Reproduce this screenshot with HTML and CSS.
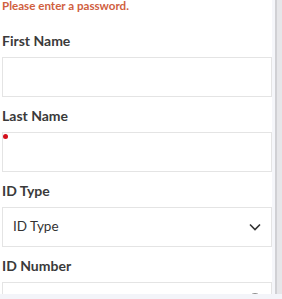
FILE: index.html
```html
<!DOCTYPE html>
<html lang="en">
<head>
    <meta charset="UTF-8">
    <meta name="viewport" content="width=device-width, initial-scale=1.0">
    <title>Register</title>
    <link rel="stylesheet" href="styles.css">
</head>
<body>
    <div class="page">
        <form class="form">
            <p class="error">Please enter a password.</p>

            <div class="field">
                <label for="firstName">First Name</label>
                <input type="text" id="firstName">
            </div>

            <div class="field">
                <label for="lastName">Last Name</label>
                <div class="control">
                    <span class="marker"></span>
                    <input type="text" id="lastName">
                </div>
            </div>

            <div class="field">
                <label for="idType">ID Type</label>
                <div class="select">
                    <span>ID Type</span>
                    <svg width="12" height="8" viewBox="0 0 12 8">
                        <path d="M1 1.5 L6 6.5 L11 1.5" fill="none" stroke="#333" stroke-width="1.6"/>
                    </svg>
                </div>
            </div>

            <div class="field">
                <label for="idNumber">ID Number</label>
                <div class="control">
                    <input type="text" id="idNumber">
                    <span class="eye"></span>
                </div>
            </div>
        </form>
        <div class="gutter"><div class="scrollbar"></div></div>
    </div>
    <div class="bottombar"></div>
</body>
</html>
```

FILE: styles.css
```css
html, body {
    margin: 0;
    height: 100%;
    overflow: hidden;
    background-color: #ffffff;
    font-family: Lato, "Open Sans", sans-serif;
    color: #333333;
}

.page {
    display: flex;
    height: 100%;
}

.form {
    width: 270px;
    padding-left: 2px;
}

.error {
    margin: -1px 0 19px;
    font-size: 11.6px;
    line-height: 13px;
    font-weight: bold;
    color: #d0603f;
}

.field {
    margin-bottom: 9px;
}

label {
    display: block;
    font-size: 14px;
    line-height: 20px;
    font-weight: bold;
    color: #3a3a3a;
    margin-bottom: 6px;
}

input {
    display: block;
    box-sizing: border-box;
    width: 100%;
    height: 40px;
    margin: 0;
    border: 1px solid #e4e4e4;
    background: #ffffff;
}

.control {
    position: relative;
}

.marker {
    position: absolute;
    left: 1px;
    top: 2px;
    width: 5px;
    height: 5px;
    border-radius: 50%;
    background-color: #d3101c;
}

.eye {
    position: absolute;
    right: 10px;
    top: 11px;
    width: 12px;
    height: 12px;
    border: 1.5px solid #8a8a8a;
    border-radius: 50%;
}

.select {
    box-sizing: border-box;
    height: 40px;
    border: 1px solid #e4e4e4;
    display: flex;
    align-items: center;
    justify-content: space-between;
    padding: 0 10px 3px 10px;
    font-size: 13.5px;
    color: #333333;
}

.select svg {
    margin-top: 3px;
}

.gutter {
    flex: 1;
    display: flex;
    justify-content: flex-end;
    background-color: #f5f6fa;
}

.scrollbar {
    width: 5px;
    background-color: #e6e6e9;
    border-left: 2px solid #d0d0d4;
}

.bottombar {
    position: fixed;
    left: 0;
    right: 0;
    bottom: 0;
    height: 5px;
    background-color: #f3f4f9;
}
```
